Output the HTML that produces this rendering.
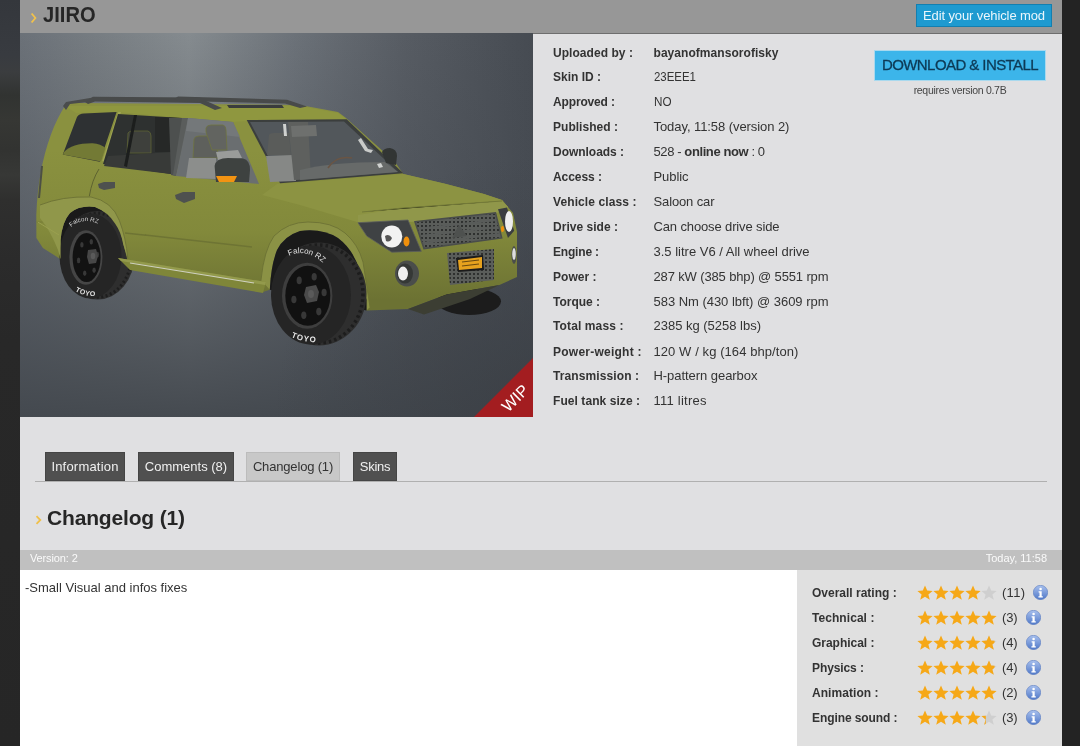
<!DOCTYPE html>
<html><head><meta charset="utf-8">
<style>
*{margin:0;padding:0;box-sizing:border-box}
body{will-change:transform}
html,body{width:1080px;height:746px;overflow:hidden;background:#232323;font-family:"Liberation Sans",sans-serif;color:#333}
#leftbg{position:absolute;left:0;top:0;width:20px;height:746px;background:linear-gradient(#34373c 0,#383b40 55px,#3b3d3f 72px,#313331 95px,#363734 120px,#323331 150px,#373836 175px,#2f2f2e 200px,#2b2b2b 260px,#282828 340px,#262626 746px)}
#page{position:absolute;left:20px;top:0;width:1042px;height:746px;background:#e0e0e2}
#hdr{position:absolute;left:0;top:0;width:1042px;height:34px;background:#979797;border-bottom:1px solid #6e6e6e}
#hdr .chev{position:absolute;left:10px;top:12px}
#hdr h1{position:absolute;left:22.5px;top:4px;font-size:22px;line-height:22px;font-weight:bold;color:#262626;transform:scaleX(0.915);transform-origin:0 0}
#editbtn{position:absolute;left:896px;top:4px;width:136px;height:23px;background:#1e9ad0;border:1px solid #137fb0;color:#eaf6fc;font-size:13px;line-height:21px;text-align:center;letter-spacing:-0.11px}
#img{position:absolute;left:0;top:33px;width:513px;height:384px;overflow:hidden}
#img svg{position:absolute;left:0;top:0}
.lb{position:absolute;left:533px;margin-top:1px;font-size:12px;line-height:12px;font-weight:bold;white-space:nowrap;color:#333}
.vl{position:absolute;left:633.5px;margin-top:1px;font-size:13px;line-height:13px;white-space:nowrap;color:#333}
#dl{position:absolute;left:855px;top:51px;width:170px;height:29px;background:#3cb5ea;box-shadow:0 0 0 1px #a9d9ee;color:#0d3a56;font-size:15px;line-height:27px;-webkit-text-stroke:0.3px #0d3a56;text-align:center;letter-spacing:-0.57px}
#req{position:absolute;left:855px;top:84px;width:170px;text-align:center;font-size:10.5px;color:#444;letter-spacing:-0.31px}
.tab{position:absolute;top:452px;height:29px;background:#505050;border:1px solid #454545;color:#f0f0f0;font-size:13px;line-height:27px;text-align:center}
#tabline{position:absolute;left:15px;top:481px;width:1012px;height:1px;background:#b0b0b0}
#clh{position:absolute;left:27px;top:506.5px;font-size:21px;line-height:21px;font-weight:bold;color:#262626;letter-spacing:-0.17px}
#clchev{position:absolute;left:14.5px;top:514.5px}
#vbar{position:absolute;left:0;top:550px;width:1042px;height:20px;background:#c0c0c0;color:#fafafa;font-size:11px}
#white{position:absolute;left:0;top:570px;width:777px;height:176px;background:#fff}
#rate{position:absolute;left:777px;top:570px;width:265px;height:176px;background:#e0e0e0}
.rl{position:absolute;left:15px;font-size:12px;line-height:12px;font-weight:bold;white-space:nowrap;color:#333;margin-top:-570px}
.rc{position:absolute;left:205px;font-size:13px;line-height:13px;white-space:nowrap;color:#333;margin-top:-570px}
.stars{position:absolute;left:120px;margin-top:-570px}
.info{position:absolute;margin-top:-570px}
</style></head><body>
<svg width="0" height="0" style="position:absolute"><defs>
<clipPath id="half"><rect x="0" y="0" width="8" height="16"/></clipPath>
<linearGradient id="ig" x1="0" y1="0" x2="0" y2="1"><stop offset="0" stop-color="#a9c1ee"/><stop offset="1" stop-color="#4f78c8"/></linearGradient>
</defs></svg>
<div id="leftbg"></div>
<div id="page">
  <div id="hdr"><svg class="chev" width="8" height="12" viewBox="0 0 8 12"><path d="M1.6 1.5 L5.4 6 L1.6 10.5" stroke="#f2c24a" stroke-width="1.8" fill="none"/></svg><h1>JIIRO</h1><div id="editbtn">Edit your vehicle mod</div></div>
  <div id="img"><svg width="513" height="384" viewBox="20 33 513 384">
<defs>
<linearGradient id="bgh" gradientUnits="userSpaceOnUse" x1="20" y1="0" x2="533" y2="0">
<stop offset="0" stop-color="#6b7178"/><stop offset="0.15" stop-color="#777d82"/><stop offset="0.33" stop-color="#858b8f"/><stop offset="0.55" stop-color="#6a7077"/><stop offset="0.75" stop-color="#575c63"/><stop offset="1" stop-color="#464b52"/></linearGradient>
<linearGradient id="bgv" gradientUnits="userSpaceOnUse" x1="0" y1="33" x2="0" y2="417">
<stop offset="0" stop-color="#454a51" stop-opacity="0"/><stop offset="0.5" stop-color="#464b52" stop-opacity="0.45"/><stop offset="1" stop-color="#42474d" stop-opacity="0.95"/></linearGradient>
<linearGradient id="bodyg" gradientUnits="userSpaceOnUse" x1="0" y1="150" x2="0" y2="300"><stop offset="0" stop-color="#8a913f"/><stop offset="0.55" stop-color="#82893b"/><stop offset="1" stop-color="#6c7233"/></linearGradient>
<radialGradient id="tire" cx="0.5" cy="0.5" r="0.5"><stop offset="0.55" stop-color="#1c1c1c"/><stop offset="0.85" stop-color="#2c2c2c"/><stop offset="1" stop-color="#232323"/></radialGradient>
<pattern id="mesh" width="4" height="4" patternUnits="userSpaceOnUse"><rect width="4" height="4" fill="#5a5d5a"/><rect x="1" y="1" width="2" height="2" fill="#2e302f"/></pattern>
<radialGradient id="bgbr" gradientUnits="userSpaceOnUse" cx="533" cy="417" r="260"><stop offset="0" stop-color="#363a40" stop-opacity="0.55"/><stop offset="1" stop-color="#363a40" stop-opacity="0"/></radialGradient>
</defs>
<rect x="20" y="33" width="513" height="384" fill="url(#bgh)"/>
<rect x="20" y="33" width="513" height="384" fill="url(#bgv)"/>
<rect x="20" y="33" width="513" height="384" fill="url(#bgbr)"/>
<!-- far tire under bumper -->
<ellipse cx="469" cy="301.5" rx="32" ry="13.5" fill="#1c1c1c"/>
<!-- body silhouette -->
<path d="M65 106 Q68 103 74 103 L300 105 L338 112 L346 118 L395 162 L403.3 174 L445 183.7 L484 194 L502 200 L508 207 L513 213 L517 232 L517 277 L499.4 285 L446.5 294.5 L408 309 L366.5 310.6 L366.5 300 L360 272 Q354 250 338 238 Q322 228 300 231 Q284 236 277 250 Q271 265 269.8 289.7 L263 292 L134 270 L120 259 L123.3 244.7 Q121 232 115.2 223.8 Q108 212 95 207 Q80 205 70 213 Q62 222 60.6 240 L60.6 259.2 L42.9 247.9 L36.4 238 L36.3 215 Q38 170 50.7 135.2 Q57 118 65 106 Z" fill="url(#bodyg)"/>
<!-- rear shade -->
<path d="M41 166 L43 166 L40 198 L38 198 Z" fill="#4c4f45"/>
<path d="M36.5 222 L60 222" stroke="#767c38" stroke-width="1"/>
<!-- roof lighter -->
<path d="M65 106 L300 106 L338 113 L346 119 L250 121 L232 122 L116 112 L76 113 Z" fill="#8f973f"/>
<!-- hood lighter -->
<path d="M277 184 L403.3 174 L445 183.7 L484 194 L502 200 L508 207 L420 216 L357 222 L300 205 L262 195 Z" fill="#8c9342"/>
<path d="M357 222 L508 207 L506 211 L410 220 Z" fill="#949b4a"/>
<!-- roof rails -->
<path d="M63 106 L66 102 L93 97.5 L88 102 L70 104 L66 110 Z" fill="#4a4c4c"/>
<path d="M85 102 L93 96.8 L200 97.6 L204 100 L222 108 L215 110 L200 103 L95 101.5 L88 104 Z" fill="#484a4a"/>
<path d="M174 99 L178 96.5 L287 99.8 L307 106.5 L300 108 L285 103.5 L178 101 Z" fill="#484a4a"/>
<path d="M227 105 L282 105 L284 108 L229 108 Z" fill="#3a3c3c"/>
<!-- rear quarter window -->
<path d="M62.8 154.5 L77 117 Q79 113.5 84 113.4 L116.6 111.9 L99.8 161.7 Z" fill="#2e3133"/>
<path d="M64 152 Q72 143 92.5 143.2 Q101 144 105.4 148 L101 161.5 L62.8 154.5 Z" fill="#737a35"/>
<path d="M102.2 161 L118.2 112 L121 112 L105 162 Z" fill="#a0a653"/>
<!-- middle window -->
<path d="M103 164 L118 114 L182 118 L171 174 Z" fill="#2e3130"/>
<path d="M128 133 Q129 131 133 131 L148 131 Q151 132 151 136 L151 153 L127 153 Z" fill="#3e403c" stroke="#5d6334" stroke-width="0.8"/>
<path d="M155 117 L181 118 L178 152 L155 152 Z" fill="#262827"/>
<path d="M108 156 L172 152 L171 174 L104 166 Z" fill="#383a38"/>
<path d="M134 115 L137 115 L127 167 L124 166 Z" fill="#1c1e1d"/>
<!-- B-pillar -->
<path d="M169 118 L189 118 L176 176 L171 175 Z" fill="#4d504f"/>
<path d="M182 118 L189 118 L176 176 L173 175 Z" fill="#5a5d5c"/>
<!-- front door window -->
<path d="M176 176 L188 118 L233 122 L259 184 Z" fill="#6a6e70"/>
<path d="M188 118 L233 122 L240 137 L186 131 Z" fill="#74787a"/>
<path d="M193 158 L194 139 Q195 136 199 136 L214 136 Q217 137 217 141 L218 158 Z" fill="#5e605c" stroke="#6e7440" stroke-width="0.8"/>
<path d="M206 132 L206 128 Q207 125 211 125 L223 125 Q226 126 226 130 L227 150 L212 150 Z" fill="#626460" stroke="#6e7440" stroke-width="0.8"/>
<path d="M189 158 L216 158 L216 179 L186 178 Z" fill="#8c8e8c"/>
<path d="M216 152 L238 150 L242 158 L218 160 Z" fill="#9a9c9a"/>
<!-- windshield -->
<path d="M246.7 120 L346.7 119.2 L403.3 173.3 L280 183.3 Z" fill="#3b3e3d"/>
<path d="M250 122 L344 121.5 L398 172 L281 181 Z" fill="#52575b"/>
<path d="M267 155 L269 135 Q270 133 274 133 L289 133 L291 156 Z" fill="#5a5c5a"/>
<path d="M266 156 L293 155 L296 181 L270 182 Z" fill="#868886"/>
<path d="M288 122 L308 122 L311 179 L294 180 Z" fill="#5e605e"/>
<path d="M291 126 L316 125 L317 136 L292 137 Z" fill="#6e706e"/>
<path d="M283 124 L286 124 L287 136 L284 136 Z" fill="#cfd1cf"/>
<path d="M300 170 Q330 162 385 162 L398 172 L300 180 Z" fill="#676a69"/>
<path d="M328 168 Q336 155 352 158" stroke="#6a5544" stroke-width="1.6" fill="none"/>
<path d="M358 140 L361 138 L368 149 L373 150 L371 153 L365 151 Z" fill="#c9cbc9"/>
<path d="M377 164 L381 163 L383 167 L379 168 Z" fill="#d0d2d0"/>
<!-- right mirror -->
<path d="M382 152 Q384 148 390 148 Q397 149 397 156 L396 165 L386 163 Z" fill="#323534"/>
<!-- left mirror -->
<path d="M214.6 166 Q216 158 228 158 L243 158.5 Q250 160 250 170 L249 182 L216 182 Z" fill="#3e4240"/>
<path d="M216 176 L237 176 L234 182 L219 182 Z" fill="#f29312"/>
<!-- door handles -->
<path d="M98 184 L104 182 L115 182 L115 188 L104 190 L99 188 Z" fill="#4e514f"/>
<path d="M175 195 L183 192 L195 192 L195 199 L184 203 L176 199 Z" fill="#4e514f"/>
<!-- door lines -->
<path d="M99 169 Q92 180 89.3 196.3" stroke="#5e6330" stroke-width="1" fill="none"/>
<path d="M127 233 L252 247" stroke="#6e7434" stroke-width="1.6"/>
<!-- front flare -->
<path d="M261 280 Q264 250 274 236 Q288 222 308 222 Q332 222 345 233 Q358 244 363 262 L370 307 L366.5 310.6 L366.5 300 L360 272 Q354 250 338 238 Q322 228 300 231 Q284 236 277 250 Q271 265 269.8 289.7 Z" fill="#8b9245"/>
<path d="M261 280 Q264 250 274 236 Q288 222 308 222 Q332 222 345 233 Q358 244 363 262 L370 307" stroke="#6c7234" stroke-width="0.9" fill="none"/>
<!-- wheel arches dark -->
<path d="M366.5 310.6 L366.5 300 L360 272 Q354 250 338 238 Q322 228 300 231 Q284 236 277 250 Q271 265 269.8 289.7 Z" fill="#1a1a1a"/>
<path d="M120 259 L123.3 244.7 Q121 232 115.2 223.8 Q108 212 95 207 Q80 205 70 213 Q62 222 60.6 240 L60.6 259.2 Z" fill="#1a1a1a"/>
<!-- rear tire -->
<ellipse cx="97.5" cy="255.2" rx="37" ry="44.3" fill="#2e2e2e"/>
<ellipse cx="97.5" cy="255.2" rx="34" ry="42" fill="none" stroke="#1e1e1e" stroke-width="3" stroke-dasharray="2 2.5"/>
<ellipse cx="90.5" cy="256" rx="31" ry="42.5" fill="#252525"/>
<ellipse cx="85.9" cy="257.5" rx="16.5" ry="27.3" fill="#454545"/>
<ellipse cx="86.6" cy="257.5" rx="14" ry="24.5" fill="#121212"/>
<ellipse cx="91.3" cy="241.8" rx="1.7" ry="2.8" fill="#383838"/><ellipse cx="97.4" cy="254.6" rx="1.7" ry="2.8" fill="#383838"/><ellipse cx="94.1" cy="270.3" rx="1.7" ry="2.8" fill="#383838"/><ellipse cx="84.7" cy="273.2" rx="1.7" ry="2.8" fill="#383838"/><ellipse cx="78.6" cy="260.4" rx="1.7" ry="2.8" fill="#383838"/><ellipse cx="81.9" cy="244.7" rx="1.7" ry="2.8" fill="#383838"/><path d="M88 250 L96 249 L98 256 L96 263 L89 264 L87 257 Z" fill="#474747"/><ellipse cx="93" cy="256" rx="2.3" ry="3.3" fill="#5a5a5a"/>
<path id="rt1" d="M71 227 Q85 215 104 227" fill="none"/><text font-family="Liberation Sans" font-size="6.2" fill="#d8d8d8"><textPath href="#rt1">Falcon RZ</textPath></text>
<path id="rt2" d="M75 291 Q85 297 97 296" fill="none"/><text font-family="Liberation Sans" font-size="7" font-weight="bold" fill="#e0e0e0" letter-spacing="0.5"><textPath href="#rt2">TOYO</textPath></text>
<path d="M115 208 L145 205 L145 268 L127.8 262 Z" fill="url(#bodyg)"/>
<path d="M125 233 L146 235.3" stroke="#6e7434" stroke-width="1.6"/>
<path d="M40 205 Q62 196 91 197 Q112 201 119.5 220.8 Q126 238 127.8 258.7 L123.3 244.7 Q121 232 115.2 223.8 Q108 212 95 207 Q80 205 70 213 Q62 222 60.6 240 L60.6 259.2 L58 250 Q50 230 40 218 Z" fill="#90974a"/>
<path d="M40 205 Q62 196 91 197 Q112 201 119.5 220.8 Q126 238 127.8 258.7" stroke="#6c7234" stroke-width="0.9" fill="none"/>
<path d="M37.8 222 L59 235" stroke="#9aa04f" stroke-width="1"/>
<!-- front tire -->
<ellipse cx="319" cy="294" rx="47.5" ry="51.4" fill="#2e2e2e"/>
<ellipse cx="319" cy="294" rx="44" ry="49" fill="none" stroke="#1d1d1d" stroke-width="3.5" stroke-dasharray="2.5 3"/>
<ellipse cx="311" cy="295" rx="40" ry="49.5" fill="#252525"/>
<ellipse cx="307.2" cy="295.7" rx="25.2" ry="33" fill="#3e3e3e"/>
<ellipse cx="307.8" cy="295.7" rx="22.5" ry="30" fill="#111"/>
<ellipse cx="314.2" cy="276.8" rx="2.6" ry="3.8" fill="#383838"/><ellipse cx="324.1" cy="292.5" rx="2.6" ry="3.8" fill="#383838"/><ellipse cx="318.8" cy="311.6" rx="2.6" ry="3.8" fill="#383838"/><ellipse cx="303.8" cy="315.2" rx="2.6" ry="3.8" fill="#383838"/><ellipse cx="293.9" cy="299.5" rx="2.6" ry="3.8" fill="#383838"/><ellipse cx="299.2" cy="280.4" rx="2.6" ry="3.8" fill="#383838"/><path d="M306 287 L316 285 L319 292 L317 301 L307 303 L304 295 Z" fill="#4a4a4a"/><ellipse cx="311" cy="294" rx="3" ry="4" fill="#5a5a5a"/>
<path id="ft1" d="M289 256 Q305 248 322 262" fill="none"/><text font-family="Liberation Sans" font-size="8" fill="#e0e0e0"><textPath href="#ft1">Falcon RZ</textPath></text>
<path id="ft2" d="M291 337 Q304 343 320 342" fill="none"/><text font-family="Liberation Sans" font-size="8" font-weight="bold" fill="#e8e8e8" letter-spacing="1"><textPath href="#ft2">TOYO</textPath></text>
<!-- side skirt -->
<path d="M118 258 L266 282 L263 293 L130 270 Z" fill="#7f8639"/>
<path d="M118 258 L266 282 L265 285 L121 261 Z" fill="#939a4c"/>
<path d="M130 263 L254 283" stroke="#cfd1c0" stroke-width="1.2"/>
<!-- hood lip -->
<path d="M358 215 L403 208 L502 201 L508 207 L497 213 L415 221.8 L358 222.7 Z" fill="#90974a"/>
<path d="M362 212 L403 208 L502 201" stroke="#737a38" stroke-width="1"/>
<!-- headlight -->
<path d="M358 222.7 L408 220 L421.3 251.3 L391.8 252.2 L366.8 236.1 Z" fill="#3f4244" stroke="#5a5d5d" stroke-width="0.8"/>
<ellipse cx="391.8" cy="236.5" rx="10.5" ry="11" fill="#f2f2f2"/>
<path d="M385 236 Q389 233 392 238 Q390 243 386 241 Z" fill="#555"/>
<ellipse cx="406.5" cy="241.5" rx="3" ry="5" fill="#f0900c"/>
<!-- grille -->
<path d="M415 221.8 L495.5 212.9 L501.7 237.9 L424 248.6 Z" fill="url(#mesh)"/>
<path d="M417 229 L497 220 M420 236 L499 227 M422 243 L500 234" stroke="#595c5a" stroke-width="2.2"/>
<path d="M415 221.8 L495.5 212.9 L501.7 237.9 L424 248.6 Z" fill="none" stroke="#4a4d4b" stroke-width="1.5"/>
<path d="M452 238 L459 225 L467 236 Z" fill="#4e514f"/>
<!-- right headlight -->
<path d="M498 209.3 L507 207.5 L514.2 230.7 L508 237.9 Z" fill="#3a3d40"/>
<ellipse cx="509" cy="221.5" rx="4" ry="10.5" fill="#eeeeee"/>
<ellipse cx="502.5" cy="229" rx="1.5" ry="3" fill="#f0900c"/>
<!-- plate frame & plate -->
<path d="M447 253 L494 249 L494 280 L450 285 Z" fill="url(#mesh)"/>
<path d="M456 258 L483 255 L484 270 L458 272 Z" fill="#1c1c1c"/>
<path d="M458 260 L482 257 L482 268 L459 270 Z" fill="#e6a21e"/>
<path d="M462 262 L479 260 M462 266 L479 264" stroke="#6a4a10" stroke-width="1.2"/>
<!-- fog lights -->
<ellipse cx="407" cy="273.6" rx="12" ry="13" fill="#4a4d4b"/>
<ellipse cx="405" cy="273.6" rx="8" ry="10" fill="#353836"/>
<ellipse cx="403" cy="273.6" rx="5" ry="7" fill="#f0f0f0"/>
<ellipse cx="514" cy="255" rx="2.5" ry="9" fill="#4a4d4b"/>
<ellipse cx="514" cy="254" rx="1.8" ry="6" fill="#dddddd"/>
<!-- under bumper -->
<path d="M408 309 L424 314.5 L470 299 L499.4 285 L446.5 294.5 Z" fill="#3c3e33"/>
<!-- WIP ribbon -->
<path d="M474 417 L533 358 L533 417 Z" fill="#a31d20"/>
<text x="0" y="0" transform="translate(519 402) rotate(-45)" font-family="Liberation Sans" font-size="16" fill="#fff" text-anchor="middle">WIP</text>
</svg>
</div>
<div class="lb" style="top:46px;letter-spacing:0.05px">Uploaded by :</div>
<div class="vl" style="top:46px;font-size:12px;font-weight:bold;letter-spacing:0.05px">bayanofmansorofisky</div>
<div class="lb" style="top:70px;letter-spacing:0.00px">Skin ID :</div>
<div class="vl" style="top:69px;transform:scaleX(0.88);transform-origin:0 0">23EEE1</div>
<div class="lb" style="top:95px;letter-spacing:-0.15px">Approved :</div>
<div class="vl" style="top:94px;transform:scaleX(0.9);transform-origin:0 0">NO</div>
<div class="lb" style="top:120px;letter-spacing:0.03px">Published :</div>
<div class="vl" style="top:119px;letter-spacing:-0.07px">Today, 11:58 (version 2)</div>
<div class="lb" style="top:145px;letter-spacing:-0.03px">Downloads :</div>
<div class="vl" style="top:144px;letter-spacing:-0.40px">528 - <b>online now</b> : 0</div>
<div class="lb" style="top:170px;letter-spacing:-0.05px">Access :</div>
<div class="vl" style="top:169px;letter-spacing:-0.08px">Public</div>
<div class="lb" style="top:195px;letter-spacing:0.10px">Vehicle class :</div>
<div class="vl" style="top:194px;letter-spacing:-0.13px">Saloon car</div>
<div class="lb" style="top:220px;letter-spacing:0.03px">Drive side :</div>
<div class="vl" style="top:219px;letter-spacing:-0.13px">Can choose drive side</div>
<div class="lb" style="top:245px;letter-spacing:-0.19px">Engine :</div>
<div class="vl" style="top:244px;letter-spacing:0.00px">3.5 litre V6 / All wheel drive</div>
<div class="lb" style="top:270px;letter-spacing:0.03px">Power :</div>
<div class="vl" style="top:269px;letter-spacing:-0.14px">287 kW (385 bhp) @ 5551 rpm</div>
<div class="lb" style="top:295px;letter-spacing:-0.02px">Torque :</div>
<div class="vl" style="top:294px;letter-spacing:-0.03px">583 Nm (430 lbft) @ 3609 rpm</div>
<div class="lb" style="top:319px;letter-spacing:0.12px">Total mass :</div>
<div class="vl" style="top:318px;letter-spacing:-0.01px">2385 kg (5258 lbs)</div>
<div class="lb" style="top:345px;letter-spacing:0.24px">Power-weight :</div>
<div class="vl" style="top:344px;letter-spacing:0.08px">120 W / kg (164 bhp/ton)</div>
<div class="lb" style="top:369px;letter-spacing:0.10px">Transmission :</div>
<div class="vl" style="top:368px;letter-spacing:-0.05px">H-pattern gearbox</div>
<div class="lb" style="top:394px;letter-spacing:0.07px">Fuel tank size :</div>
<div class="vl" style="top:393px;letter-spacing:0.24px">111 litres</div>
  <div id="dl">DOWNLOAD &amp; INSTALL</div>
  <div id="req">requires version 0.7B</div>
  <div class="tab" style="left:25px;width:80px;letter-spacing:0.2px">Information</div>
  <div class="tab" style="left:118px;width:96px">Comments (8)</div>
  <div class="tab" style="left:226px;width:94px;background:#c8c8c8;border-color:#bcbcbc;color:#333;letter-spacing:-0.17px">Changelog (1)</div>
  <div class="tab" style="left:333px;width:44px;letter-spacing:-0.27px">Skins</div>
  <div id="tabline"></div>
  <svg id="clchev" width="8" height="10" viewBox="0 0 8 10"><path d="M1.5 1.2 L5.3 5 L1.5 8.8" stroke="#f0c04a" stroke-width="1.8" fill="none"/></svg><div id="clh">Changelog (1)</div>
  <div id="vbar"><span style="position:absolute;left:10px;top:1.5px;letter-spacing:-0.13px">Version: 2</span><span style="position:absolute;right:15px;top:1.5px">Today, 11:58</span></div>
  <div id="white"><span style="position:absolute;left:5px;top:10px;font-size:13px">-Small Visual and infos fixes</span></div>
  <div id="rate">
<div class="rl" style="top:587px;letter-spacing:0px">Overall rating :</div>
<div class="rc" style="top:586px;letter-spacing:0.28px">(11)</div>
<svg class="stars" style="top:585px" width="82" height="16" viewBox="0 0 82 16"><path transform="translate(0.0,0)" d="M8 0.5 L10.2 5.6 L15.6 5.9 L11.4 9.4 L12.8 14.8 L8 11.8 L3.2 14.8 L4.6 9.4 L0.4 5.9 L5.8 5.6 Z" fill="#f6a817"/><path transform="translate(16.0,0)" d="M8 0.5 L10.2 5.6 L15.6 5.9 L11.4 9.4 L12.8 14.8 L8 11.8 L3.2 14.8 L4.6 9.4 L0.4 5.9 L5.8 5.6 Z" fill="#f6a817"/><path transform="translate(32.0,0)" d="M8 0.5 L10.2 5.6 L15.6 5.9 L11.4 9.4 L12.8 14.8 L8 11.8 L3.2 14.8 L4.6 9.4 L0.4 5.9 L5.8 5.6 Z" fill="#f6a817"/><path transform="translate(48.0,0)" d="M8 0.5 L10.2 5.6 L15.6 5.9 L11.4 9.4 L12.8 14.8 L8 11.8 L3.2 14.8 L4.6 9.4 L0.4 5.9 L5.8 5.6 Z" fill="#f6a817"/><path transform="translate(64.0,0)" d="M8 0.5 L10.2 5.6 L15.6 5.9 L11.4 9.4 L12.8 14.8 L8 11.8 L3.2 14.8 L4.6 9.4 L0.4 5.9 L5.8 5.6 Z" fill="#cfcfcf"/></svg>
<svg class="info" style="left:235.8px;top:585px" width="15" height="15" viewBox="0 0 15 15"><circle cx="7.5" cy="7.5" r="7.2" fill="url(#ig)" stroke="#5a7cc0" stroke-width="0.6"/><circle cx="7.6" cy="4" r="1.3" fill="#fff"/><path d="M5.6 6.2 H8.7 V11.2 H9.8 V12.4 H5.4 V11.2 H6.5 V7.4 H5.6 Z" fill="#fff"/></svg>
<div class="rl" style="top:612px;letter-spacing:0.06px">Technical :</div>
<div class="rc" style="top:611px;letter-spacing:-0.2px">(3)</div>
<svg class="stars" style="top:610px" width="82" height="16" viewBox="0 0 82 16"><path transform="translate(0.0,0)" d="M8 0.5 L10.2 5.6 L15.6 5.9 L11.4 9.4 L12.8 14.8 L8 11.8 L3.2 14.8 L4.6 9.4 L0.4 5.9 L5.8 5.6 Z" fill="#f6a817"/><path transform="translate(16.0,0)" d="M8 0.5 L10.2 5.6 L15.6 5.9 L11.4 9.4 L12.8 14.8 L8 11.8 L3.2 14.8 L4.6 9.4 L0.4 5.9 L5.8 5.6 Z" fill="#f6a817"/><path transform="translate(32.0,0)" d="M8 0.5 L10.2 5.6 L15.6 5.9 L11.4 9.4 L12.8 14.8 L8 11.8 L3.2 14.8 L4.6 9.4 L0.4 5.9 L5.8 5.6 Z" fill="#f6a817"/><path transform="translate(48.0,0)" d="M8 0.5 L10.2 5.6 L15.6 5.9 L11.4 9.4 L12.8 14.8 L8 11.8 L3.2 14.8 L4.6 9.4 L0.4 5.9 L5.8 5.6 Z" fill="#f6a817"/><path transform="translate(64.0,0)" d="M8 0.5 L10.2 5.6 L15.6 5.9 L11.4 9.4 L12.8 14.8 L8 11.8 L3.2 14.8 L4.6 9.4 L0.4 5.9 L5.8 5.6 Z" fill="#f6a817"/></svg>
<svg class="info" style="left:228.8px;top:610px" width="15" height="15" viewBox="0 0 15 15"><circle cx="7.5" cy="7.5" r="7.2" fill="url(#ig)" stroke="#5a7cc0" stroke-width="0.6"/><circle cx="7.6" cy="4" r="1.3" fill="#fff"/><path d="M5.6 6.2 H8.7 V11.2 H9.8 V12.4 H5.4 V11.2 H6.5 V7.4 H5.6 Z" fill="#fff"/></svg>
<div class="rl" style="top:637px;letter-spacing:-0.03px">Graphical :</div>
<div class="rc" style="top:636px;letter-spacing:-0.2px">(4)</div>
<svg class="stars" style="top:635px" width="82" height="16" viewBox="0 0 82 16"><path transform="translate(0.0,0)" d="M8 0.5 L10.2 5.6 L15.6 5.9 L11.4 9.4 L12.8 14.8 L8 11.8 L3.2 14.8 L4.6 9.4 L0.4 5.9 L5.8 5.6 Z" fill="#f6a817"/><path transform="translate(16.0,0)" d="M8 0.5 L10.2 5.6 L15.6 5.9 L11.4 9.4 L12.8 14.8 L8 11.8 L3.2 14.8 L4.6 9.4 L0.4 5.9 L5.8 5.6 Z" fill="#f6a817"/><path transform="translate(32.0,0)" d="M8 0.5 L10.2 5.6 L15.6 5.9 L11.4 9.4 L12.8 14.8 L8 11.8 L3.2 14.8 L4.6 9.4 L0.4 5.9 L5.8 5.6 Z" fill="#f6a817"/><path transform="translate(48.0,0)" d="M8 0.5 L10.2 5.6 L15.6 5.9 L11.4 9.4 L12.8 14.8 L8 11.8 L3.2 14.8 L4.6 9.4 L0.4 5.9 L5.8 5.6 Z" fill="#f6a817"/><clipPath id="c647"><rect x="0" y="0" width="13.6" height="16"/></clipPath><path transform="translate(64.0,0)" d="M8 0.5 L10.2 5.6 L15.6 5.9 L11.4 9.4 L12.8 14.8 L8 11.8 L3.2 14.8 L4.6 9.4 L0.4 5.9 L5.8 5.6 Z" fill="#cfcfcf"/><path transform="translate(64.0,0)" d="M8 0.5 L10.2 5.6 L15.6 5.9 L11.4 9.4 L12.8 14.8 L8 11.8 L3.2 14.8 L4.6 9.4 L0.4 5.9 L5.8 5.6 Z" fill="#f6a817" clip-path="url(#c647)"/></svg>
<svg class="info" style="left:228.8px;top:635px" width="15" height="15" viewBox="0 0 15 15"><circle cx="7.5" cy="7.5" r="7.2" fill="url(#ig)" stroke="#5a7cc0" stroke-width="0.6"/><circle cx="7.6" cy="4" r="1.3" fill="#fff"/><path d="M5.6 6.2 H8.7 V11.2 H9.8 V12.4 H5.4 V11.2 H6.5 V7.4 H5.6 Z" fill="#fff"/></svg>
<div class="rl" style="top:662px;letter-spacing:-0.1px">Physics :</div>
<div class="rc" style="top:661px;letter-spacing:-0.2px">(4)</div>
<svg class="stars" style="top:660px" width="82" height="16" viewBox="0 0 82 16"><path transform="translate(0.0,0)" d="M8 0.5 L10.2 5.6 L15.6 5.9 L11.4 9.4 L12.8 14.8 L8 11.8 L3.2 14.8 L4.6 9.4 L0.4 5.9 L5.8 5.6 Z" fill="#f6a817"/><path transform="translate(16.0,0)" d="M8 0.5 L10.2 5.6 L15.6 5.9 L11.4 9.4 L12.8 14.8 L8 11.8 L3.2 14.8 L4.6 9.4 L0.4 5.9 L5.8 5.6 Z" fill="#f6a817"/><path transform="translate(32.0,0)" d="M8 0.5 L10.2 5.6 L15.6 5.9 L11.4 9.4 L12.8 14.8 L8 11.8 L3.2 14.8 L4.6 9.4 L0.4 5.9 L5.8 5.6 Z" fill="#f6a817"/><path transform="translate(48.0,0)" d="M8 0.5 L10.2 5.6 L15.6 5.9 L11.4 9.4 L12.8 14.8 L8 11.8 L3.2 14.8 L4.6 9.4 L0.4 5.9 L5.8 5.6 Z" fill="#f6a817"/><clipPath id="c672"><rect x="0" y="0" width="13.6" height="16"/></clipPath><path transform="translate(64.0,0)" d="M8 0.5 L10.2 5.6 L15.6 5.9 L11.4 9.4 L12.8 14.8 L8 11.8 L3.2 14.8 L4.6 9.4 L0.4 5.9 L5.8 5.6 Z" fill="#cfcfcf"/><path transform="translate(64.0,0)" d="M8 0.5 L10.2 5.6 L15.6 5.9 L11.4 9.4 L12.8 14.8 L8 11.8 L3.2 14.8 L4.6 9.4 L0.4 5.9 L5.8 5.6 Z" fill="#f6a817" clip-path="url(#c672)"/></svg>
<svg class="info" style="left:228.8px;top:660px" width="15" height="15" viewBox="0 0 15 15"><circle cx="7.5" cy="7.5" r="7.2" fill="url(#ig)" stroke="#5a7cc0" stroke-width="0.6"/><circle cx="7.6" cy="4" r="1.3" fill="#fff"/><path d="M5.6 6.2 H8.7 V11.2 H9.8 V12.4 H5.4 V11.2 H6.5 V7.4 H5.6 Z" fill="#fff"/></svg>
<div class="rl" style="top:687px;letter-spacing:0.06px">Animation :</div>
<div class="rc" style="top:686px;letter-spacing:-0.2px">(2)</div>
<svg class="stars" style="top:685px" width="82" height="16" viewBox="0 0 82 16"><path transform="translate(0.0,0)" d="M8 0.5 L10.2 5.6 L15.6 5.9 L11.4 9.4 L12.8 14.8 L8 11.8 L3.2 14.8 L4.6 9.4 L0.4 5.9 L5.8 5.6 Z" fill="#f6a817"/><path transform="translate(16.0,0)" d="M8 0.5 L10.2 5.6 L15.6 5.9 L11.4 9.4 L12.8 14.8 L8 11.8 L3.2 14.8 L4.6 9.4 L0.4 5.9 L5.8 5.6 Z" fill="#f6a817"/><path transform="translate(32.0,0)" d="M8 0.5 L10.2 5.6 L15.6 5.9 L11.4 9.4 L12.8 14.8 L8 11.8 L3.2 14.8 L4.6 9.4 L0.4 5.9 L5.8 5.6 Z" fill="#f6a817"/><path transform="translate(48.0,0)" d="M8 0.5 L10.2 5.6 L15.6 5.9 L11.4 9.4 L12.8 14.8 L8 11.8 L3.2 14.8 L4.6 9.4 L0.4 5.9 L5.8 5.6 Z" fill="#f6a817"/><path transform="translate(64.0,0)" d="M8 0.5 L10.2 5.6 L15.6 5.9 L11.4 9.4 L12.8 14.8 L8 11.8 L3.2 14.8 L4.6 9.4 L0.4 5.9 L5.8 5.6 Z" fill="#f6a817"/></svg>
<svg class="info" style="left:228.8px;top:685px" width="15" height="15" viewBox="0 0 15 15"><circle cx="7.5" cy="7.5" r="7.2" fill="url(#ig)" stroke="#5a7cc0" stroke-width="0.6"/><circle cx="7.6" cy="4" r="1.3" fill="#fff"/><path d="M5.6 6.2 H8.7 V11.2 H9.8 V12.4 H5.4 V11.2 H6.5 V7.4 H5.6 Z" fill="#fff"/></svg>
<div class="rl" style="top:712px;letter-spacing:-0.09px">Engine sound :</div>
<div class="rc" style="top:711px;letter-spacing:-0.2px">(3)</div>
<svg class="stars" style="top:710px" width="82" height="16" viewBox="0 0 82 16"><path transform="translate(0.0,0)" d="M8 0.5 L10.2 5.6 L15.6 5.9 L11.4 9.4 L12.8 14.8 L8 11.8 L3.2 14.8 L4.6 9.4 L0.4 5.9 L5.8 5.6 Z" fill="#f6a817"/><path transform="translate(16.0,0)" d="M8 0.5 L10.2 5.6 L15.6 5.9 L11.4 9.4 L12.8 14.8 L8 11.8 L3.2 14.8 L4.6 9.4 L0.4 5.9 L5.8 5.6 Z" fill="#f6a817"/><path transform="translate(32.0,0)" d="M8 0.5 L10.2 5.6 L15.6 5.9 L11.4 9.4 L12.8 14.8 L8 11.8 L3.2 14.8 L4.6 9.4 L0.4 5.9 L5.8 5.6 Z" fill="#f6a817"/><path transform="translate(48.0,0)" d="M8 0.5 L10.2 5.6 L15.6 5.9 L11.4 9.4 L12.8 14.8 L8 11.8 L3.2 14.8 L4.6 9.4 L0.4 5.9 L5.8 5.6 Z" fill="#f6a817"/><clipPath id="c722"><rect x="0" y="0" width="4.8" height="16"/></clipPath><path transform="translate(64.0,0)" d="M8 0.5 L10.2 5.6 L15.6 5.9 L11.4 9.4 L12.8 14.8 L8 11.8 L3.2 14.8 L4.6 9.4 L0.4 5.9 L5.8 5.6 Z" fill="#cfcfcf"/><path transform="translate(64.0,0)" d="M8 0.5 L10.2 5.6 L15.6 5.9 L11.4 9.4 L12.8 14.8 L8 11.8 L3.2 14.8 L4.6 9.4 L0.4 5.9 L5.8 5.6 Z" fill="#f6a817" clip-path="url(#c722)"/></svg>
<svg class="info" style="left:228.8px;top:710px" width="15" height="15" viewBox="0 0 15 15"><circle cx="7.5" cy="7.5" r="7.2" fill="url(#ig)" stroke="#5a7cc0" stroke-width="0.6"/><circle cx="7.6" cy="4" r="1.3" fill="#fff"/><path d="M5.6 6.2 H8.7 V11.2 H9.8 V12.4 H5.4 V11.2 H6.5 V7.4 H5.6 Z" fill="#fff"/></svg>
  </div>
</div>
</body></html>
